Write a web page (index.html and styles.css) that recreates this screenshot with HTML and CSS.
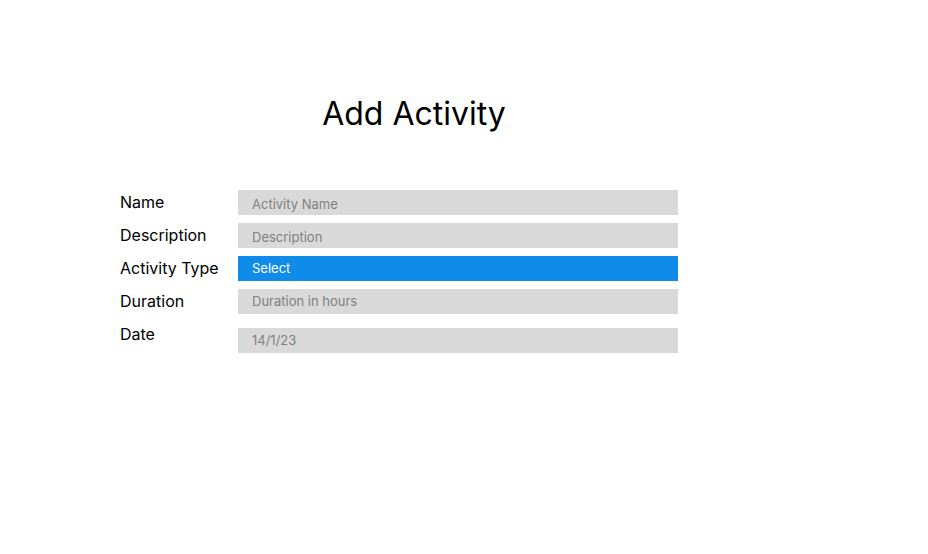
FILE: index.html
```html
<!DOCTYPE html>
<html>
<head>
<meta charset="utf-8">
<link rel="stylesheet" href="styles.css">
</head>
<body>
<div class="page">
  <h1 class="title">Add Activity</h1>
  <form class="form">
    <div class="row">
      <label class="label">Name</label>
      <div class="field field-name">Activity Name</div>
    </div>
    <div class="row">
      <label class="label">Description</label>
      <div class="field field-desc">Description</div>
    </div>
    <div class="row">
      <label class="label">Activity Type</label>
      <div class="field select">Select</div>
    </div>
    <div class="row">
      <label class="label">Duration</label>
      <div class="field">Duration in hours</div>
    </div>
    <div class="row row-date">
      <label class="label">Date</label>
      <div class="field">14/1/23</div>
    </div>
  </form>
</div>
</body>
</html>
```
FILE: styles.css
```css
html, body {
  margin: 0;
  padding: 0;
  background: #ffffff;
}
body {
  font-family: Inter, "Noto Sans", sans-serif;
  color: #000000;
}
.page {
  width: 928px;
  height: 554px;
  padding-top: 94px;
  padding-left: 120px;
  box-sizing: border-box;
}
.title {
  width: 588px;
  margin: 0;
  text-align: center;
  font-size: 32px;
  font-weight: 400;
  line-height: 39px;
}
.form {
  margin-top: 57px;
  display: flex;
  flex-direction: column;
  gap: 8px;
}
.row {
  display: flex;
  align-items: flex-start;
}
.label {
  width: 118px;
  height: 25px;
  font-size: 16px;
  line-height: 24px;
}
.field {
  width: 440px;
  height: 25px;
  box-sizing: border-box;
  padding-left: 14px;
  padding-top: 4px;
  background: #d9d9d9;
  color: #808080;
  font-size: 13px;
  line-height: 16px;
}
.field-name {
  padding-top: 6px;
}
.field-desc {
  padding-top: 6px;
}
.select {
  background: #0f8ce9;
  color: #ffffff;
}
.row-date .field {
  margin-top: 6px;
}
```
